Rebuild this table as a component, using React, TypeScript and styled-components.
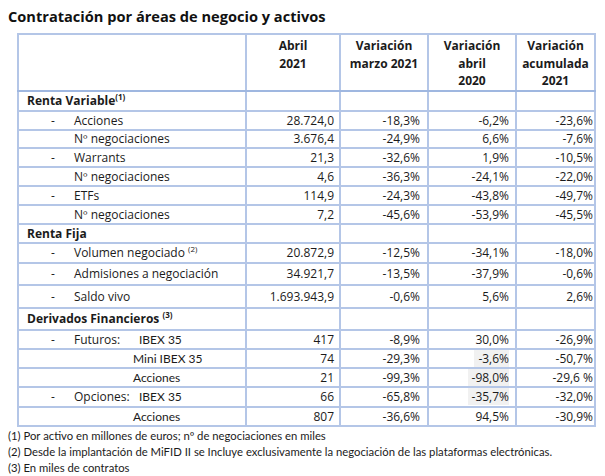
import React from "react";
import styled, { createGlobalStyle } from "styled-components";

const Global = createGlobalStyle`
  html, body { margin: 0; padding: 0; background: #ffffff; }
  body { font-family: "Open Sans", "DejaVu Sans", sans-serif; color: #1b1b1b; }
`;

const Page = styled.div`
  padding: 6px 0 0 8px;
  width: 597px;
`;

const Title = styled.h2`
  margin: 0 0 7px 0;
  font-size: 14.6px;
  font-weight: 700;
  line-height: 20px;
  color: #111;
`;

const Table = styled.table`
  border-collapse: collapse;
  table-layout: fixed;
  margin-left: 9px;
  width: 577px;
  font-size: 12px;
`;

const Th = styled.th`
  border: 2px solid #b4c6e7;
  border-bottom-color: #9fb7e0;
  font-weight: 700;
  text-align: center;
  vertical-align: top;
  line-height: 17.5px;
  padding: 2px 2px 0 2px;
  height: 53px;
`;

const Tr = styled.tr<{ $h: number }>`
  height: ${(p) => p.$h}px;
`;

const Td = styled.td<{ $pr?: number }>`
  border: 2px solid #b4c6e7;
  padding: 0 ${(p) => p.$pr ?? 6}px 0 0;
  text-align: right;
  white-space: nowrap;
  line-height: 16px;
`;

const LabelTd = styled.td`
  border: 2px solid #b4c6e7;
  padding: 0;
  text-align: left;
  line-height: 16px;
  white-space: nowrap;
`;

const Section = styled.div`
  padding-left: 8px;
  font-weight: 700;
`;

const Item = styled.div<{ $pl?: number }>`
  display: flex;
  padding-left: ${(p) => p.$pl ?? 32}px;
`;

const Dash = styled.span`
  width: 23px;
  flex: none;
`;

const Kind = styled.span<{ $w: number }>`
  width: ${(p) => p.$w}px;
  flex: none;
`;

const Calib = styled.span`
  font-family: "Lato", "Open Sans", sans-serif;
  font-size: 12px;
`;

const Sup = styled.sup`
  font-size: 8px;
  line-height: 0;
  vertical-align: 5px;
`;

const Shade = styled.span`
  background: #f1f1f1;
  padding-left: 4px;
`;

const Notes = styled.div`
  margin-top: 1px;
  font-family: "Lato", "Open Sans", sans-serif;
  font-size: 11.3px;
  line-height: 16px;
  color: #1b1b1b;
`;

type Vals = [string, string, React.ReactNode, string];

type Block =
  | { kind: "section"; title: React.ReactNode; h: number }
  | { kind: "row"; label: React.ReactNode; v: Vals; h: number };

const vals = (a: string, b: string, c: React.ReactNode, d: string): Vals => [a, b, c, d];

const item = (text: React.ReactNode) => (
  <Item>
    <Dash>-</Dash>
    <span>{text}</span>
  </Item>
);
const sub = (text: React.ReactNode) => (
  <Item $pl={55}>
    <span>{text}</span>
  </Item>
);

const blocks: Block[] = [
  {
    kind: "section",
    title: (
      <>
        Renta Variable<Sup>(1)</Sup>
      </>
    ),
    h: 20,
  },
  { kind: "row", label: item("Acciones"), v: vals("28.724,0", "-18,3%", "-6,2%", "-23,6%"), h: 19 },
  { kind: "row", label: sub("Nº negociaciones"), v: vals("3.676,4", "-24,9%", "6,6%", "-7,6%"), h: 18 },
  { kind: "row", label: item("Warrants"), v: vals("21,3", "-32,6%", "1,9%", "-10,5%"), h: 19 },
  { kind: "row", label: sub("Nº negociaciones"), v: vals("4,6", "-36,3%", "-24,1%", "-22,0%"), h: 19 },
  { kind: "row", label: item("ETFs"), v: vals("114,9", "-24,3%", "-43,8%", "-49,7%"), h: 19 },
  { kind: "row", label: sub("Nº negociaciones"), v: vals("7,2", "-45,6%", "-53,9%", "-45,5%"), h: 19 },
  { kind: "section", title: "Renta Fija", h: 19 },
  {
    kind: "row",
    label: item(
      <>
        Volumen negociado <Sup>(2)</Sup>
      </>
    ),
    v: vals("20.872,9", "-12,5%", "-34,1%", "-18,0%"),
    h: 20,
  },
  { kind: "row", label: item("Admisiones a negociación"), v: vals("34.921,7", "-13,5%", "-37,9%", "-0,6%"), h: 22 },
  { kind: "row", label: item("Saldo vivo"), v: vals("1.693.943,9", "-0,6%", "5,6%", "2,6%"), h: 23 },
  {
    kind: "section",
    title: (
      <>
        Derivados Financieros <Sup>(3)</Sup>
      </>
    ),
    h: 22,
  },
  {
    kind: "row",
    label: (
      <Item>
        <Dash>-</Dash>
        <Kind $w={65}>Futuros:</Kind>
        <Calib>IBEX 35</Calib>
      </Item>
    ),
    v: vals("417", "-8,9%", "30,0%", "-26,9%"),
    h: 19,
  },
  {
    kind: "row",
    label: (
      <Item $pl={114}>
        <Calib>Mini IBEX 35</Calib>
      </Item>
    ),
    v: vals("74", "-29,3%", <Shade>-3,6%</Shade>, "-50,7%"),
    h: 19,
  },
  {
    kind: "row",
    label: (
      <Item $pl={114}>
        <Calib>Acciones</Calib>
      </Item>
    ),
    v: vals("21", "-99,3%", <Shade>-98,0%</Shade>, "-29,6 %"),
    h: 19,
  },
  {
    kind: "row",
    label: (
      <Item>
        <Dash>-</Dash>
        <Kind $w={65}>Opciones:</Kind>
        <Calib>IBEX 35</Calib>
      </Item>
    ),
    v: vals("66", "-65,8%", <Shade>-35,7%</Shade>, "-32,0%"),
    h: 20,
  },
  {
    kind: "row",
    label: (
      <Item $pl={114}>
        <Calib>Acciones</Calib>
      </Item>
    ),
    v: vals("807", "-36,6%", "94,5%", "-30,9%"),
    h: 19,
  },
];

const pads = [5, 7, 6, 1];

export default function App() {
  return (
    <>
      <Global />
      <Page>
        <Title>Contratación por áreas de negocio y activos</Title>
        <Table>
          <colgroup>
            <col style={{ width: 228 }} />
            <col style={{ width: 94 }} />
            <col style={{ width: 88 }} />
            <col style={{ width: 88 }} />
            <col style={{ width: 79 }} />
          </colgroup>
          <thead>
            <tr>
              <Th />
              <Th>
                Abril
                <br />
                2021
              </Th>
              <Th>
                Variación
                <br />
                marzo 2021
              </Th>
              <Th>
                Variación
                <br />
                abril
                <br />
                2020
              </Th>
              <Th>
                Variación
                <br />
                acumulada
                <br />
                2021
              </Th>
            </tr>
          </thead>
          <tbody>
            {blocks.map((b, i) =>
              b.kind === "section" ? (
                <Tr key={i} $h={b.h}>
                  <LabelTd>
                    <Section>{b.title}</Section>
                  </LabelTd>
                  <Td />
                  <Td />
                  <Td />
                  <Td />
                </Tr>
              ) : (
                <Tr key={i} $h={b.h}>
                  <LabelTd>{b.label}</LabelTd>
                  {b.v.map((v, j) => (
                    <Td key={j} $pr={pads[j]}>
                      {v}
                    </Td>
                  ))}
                </Tr>
              )
            )}
          </tbody>
        </Table>
        <Notes>
          <div>(1) Por activo en millones de euros; nº de negociaciones en miles</div>
          <div>(2) Desde la implantación de MiFID II se Incluye exclusivamente la negociación de las plataformas electrónicas.</div>
          <div>(3) En miles de contratos</div>
        </Notes>
      </Page>
    </>
  );
}
